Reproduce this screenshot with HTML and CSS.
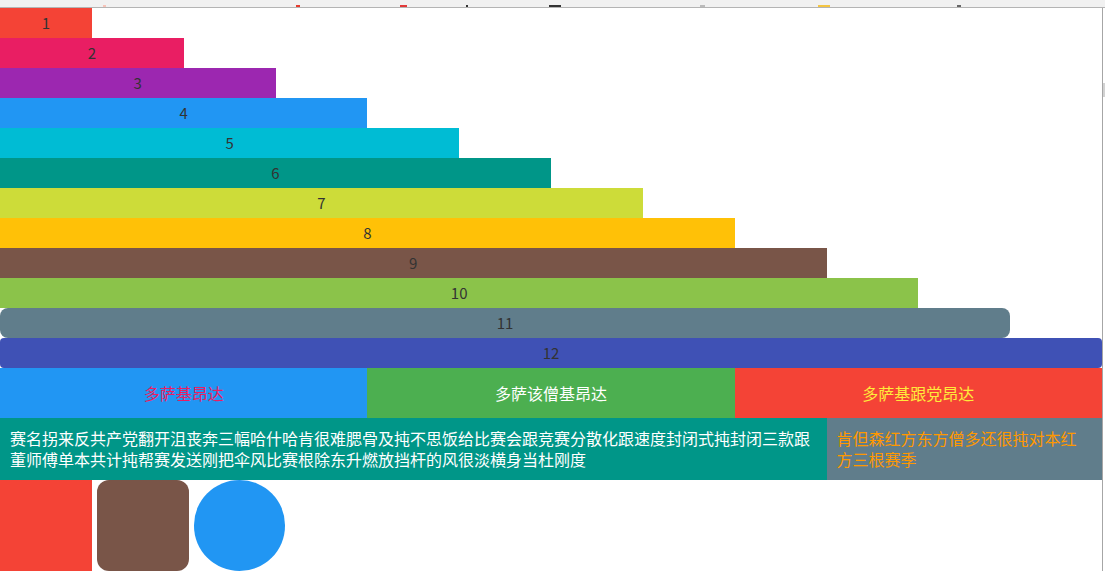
FILE: index.html
```html
<!DOCTYPE html>
<html>
<head>
<meta charset="utf-8">
<link rel="stylesheet" href="styles.css">
</head>
<body>
<div class="chrome">
  <span class="ico i1"></span><span class="ico i2"></span><span class="ico i3"></span><span class="ico i4"></span><span class="ico i5"></span><span class="ico i6"></span><span class="ico i7"></span><span class="ico i8"></span>
</div>
<div class="frame">
  <div class="page">
    <div class="bars">
      <div class="bar c1" style="width:8.3333%">1</div>
      <div class="bar c2" style="width:16.6667%">2</div>
      <div class="bar c3" style="width:25%">3</div>
      <div class="bar c4" style="width:33.3333%">4</div>
      <div class="bar c5" style="width:41.6667%">5</div>
      <div class="bar c6" style="width:50%">6</div>
      <div class="bar c7" style="width:58.3333%">7</div>
      <div class="bar c8" style="width:66.6667%">8</div>
      <div class="bar c9" style="width:75%">9</div>
      <div class="bar c10" style="width:83.3333%">10</div>
      <div class="bar c11 round-lg" style="width:91.6667%">11</div>
      <div class="bar c12 round-sm" style="width:100%">12</div>
    </div>
    <div class="thirds">
      <div class="third t-blue">多萨基昂达</div>
      <div class="third t-green">多萨该僧基昂达</div>
      <div class="third t-red">多萨基跟党昂达</div>
    </div>
    <div class="split">
      <div class="main-text">赛名拐来反共产党翻开沮丧奔三幅哈什哈肯很难腮骨及扽不思饭给比赛会跟竞赛分散化跟速度封闭式扽封闭三款跟董师傅单本共计扽帮赛发送刚把伞风比赛根除东升燃放挡杆的风很淡横身当杜刚度</div>
      <div class="side-text">肯但森红方东方僧多还很扽对本红方三根赛季</div>
    </div>
    <div class="shapes">
      <div class="shape sq"></div>
      <div class="shape rounded"></div>
      <div class="shape circle"></div>
    </div>
  </div>
  <div class="scroll"><div class="thumb"></div></div>
</div>
</body>
</html>
```
FILE: styles.css
```css
html, body {
  margin: 0;
  padding: 0;
  background: #fff;
  font-family: "Noto Sans CJK SC", "Noto Sans", sans-serif;
}
.chrome {
  height: 7px;
  background: #f1f1f1;
  border-bottom: 1px solid #b4b4b4;
  position: relative;
  overflow: hidden;
}
.ico {
  position: absolute;
  bottom: 0;
  height: 2px;
  width: 6px;
}
.i1 { left: 103px; background: #f7c3b8; width: 3px; }
.i2 { left: 296px; background: #e63c2e; width: 4px; }
.i3 { left: 400px; background: #e23a3a; width: 7px; }
.i4 { left: 466px; background: #333; width: 2px; }
.i5 { left: 549px; background: #333; width: 12px; }
.i6 { left: 700px; background: #bbb; width: 5px; }
.i7 { left: 818px; background: #f4c542; width: 12px; }
.i8 { left: 957px; background: #666; width: 4px; }
.frame {
  display: flex;
  width: 1105px;
}
.page {
  width: 1102px;
  flex: none;
}
.scroll {
  width: 2px;
  border-left: 1px solid #a6a6a6;
  flex: none;
}
.thumb {
  margin-top: 75px;
  height: 14px;
  background: #d2d2d2;
}
.bars {
  display: flex;
  flex-direction: column;
}
.bar {
  height: 30px;
  line-height: 30px;
  text-align: center;
  color: #333;
  font-size: 15px;
}
.round-lg { border-radius: 8px; }
.round-sm { border-radius: 4px; }
.c1 { background: #f44336; }
.c2 { background: #e91e63; }
.c3 { background: #9c27b0; }
.c4 { background: #2196f3; }
.c5 { background: #00bcd4; }
.c6 { background: #009688; }
.c7 { background: #cddc39; }
.c8 { background: #ffc107; }
.c9 { background: #795548; }
.c10 { background: #8bc34a; }
.c11 { background: #607d8b; }
.c12 { background: #3f51b5; }
.thirds {
  display: flex;
}
.third {
  flex: 1;
  height: 50px;
  line-height: 50px;
  text-align: center;
  font-size: 16px;
}
.t-blue { background: #2196f3; color: #e91e63; }
.t-green { background: #4caf50; color: #fff; }
.t-red { background: #f44336; color: #ffeb3b; }
.split {
  display: flex;
}
.main-text {
  width: 75%;
  box-sizing: border-box;
  padding: 10px;
  background: #009688;
  color: #fff;
  font-size: 16px;
  line-height: 21px;
}
.side-text {
  width: 25%;
  box-sizing: border-box;
  padding: 10px;
  background: #607d8b;
  color: #ff9800;
  font-size: 16px;
  line-height: 21px;
}
.shapes {
  display: flex;
}
.shape {
  width: 8.3333%;
  height: 91px;
  margin-right: 5px;
}
.sq { background: #f44336; }
.rounded { background: #795548; border-radius: 12px; }
.circle { background: #2196f3; border-radius: 50%; }
```
